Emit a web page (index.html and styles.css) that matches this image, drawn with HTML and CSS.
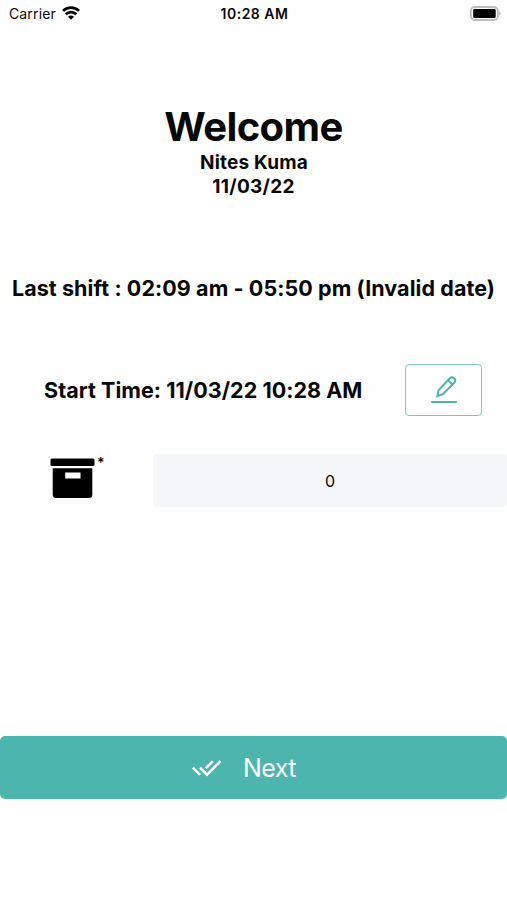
FILE: index.html
```html
<!DOCTYPE html>
<html lang="en">
<head>
<meta charset="utf-8">
<title>Welcome</title>
<link rel="stylesheet" href="styles.css">
</head>
<body>
<header class="status">
  <div class="carrier"><span>Carrier</span>
    <svg class="wifi" width="18" height="14" viewBox="0 0 18 14" fill="none" stroke="#000" stroke-width="2.7"><path d="M1 4.900C5.4.5 12.600.5 17 4.900M3.700 8.200c3-2.900 7.600-2.900 10.600 0"/><path d="M6 10.700c1.600-1.600 4.400-1.600 6 0l-3 3.100z" fill="#000" stroke="none"/></svg>
  </div>
  <div class="clock"><span>10:28 AM</span></div>
  <div class="power"><svg width="31" height="16" viewBox="0 0 31 16"><rect x=".9" y="1" width="27" height="13" rx="3.800" fill="#fff" stroke="#bdbdbd" stroke-width="1.800"/><rect x="3.200" y="3" width="22.500" height="9" rx="1.200"/><path d="M29 5.400c2 .6 2 3.400 0 4z" fill="#bdbdbd"/></svg></div>
</header>
<main>
  <section class="intro">
    <h1><span>Welcome</span></h1>
    <p class="name"><span>Nites Kuma</span></p>
    <p class="date"><span>11/03/22</span></p>
  </section>
  <p class="last"><span>Last shift : 02:09 am - 05:50 pm (Invalid date)</span></p>
  <section class="start">
    <p><span>Start Time: 11/03/22 10:28 AM</span></p>
    <button class="edit" aria-label="Edit"><svg width="30" height="30" viewBox="0 0 30 30" fill="none" stroke="#4bb5ae" stroke-width="2" stroke-linecap="round" stroke-linejoin="round"><path d="M8.200 21.300l1.500-6.200L20.800 3.200c2.800-2.600 7 1.400 4.600 4.300L14.100 19z"/><path d="M19 5.200l4.500 4.300M3 27h24"/></svg></button>
  </section>
  <section class="boxes">
    <div class="box"><svg width="45" height="41" viewBox="0 0 45 41"><rect x=".5" y=".5" width="44" height="7.500" rx="1.500"/><path fill-rule="evenodd" d="M2.700 10.300h39.600v26.200a3.500 3.500 0 0 1-3.500 3.500H6.200a3.500 3.500 0 0 1-3.500-3.500zM15.200 14.600v6h15.300v-6z"/></svg><span>*</span></div>
    <div class="field">0</div>
  </section>
  <button class="next"><svg width="30" height="18" viewBox="0 0 30 18" fill="none" stroke="#fff" stroke-width="2.500"><path d="M.9 8.700l7.200 7.200M8 8.700l7 7L28.500 2.100M13.700 9.300l7.200-7.200"/></svg><span>Next</span></button>
</main>
</body>
</html>
```
FILE: styles.css
```css
* { box-sizing: border-box; }
body { margin: 0; height: 900px; background: #fefefe; color: #080808; font-family: Inter, "Liberation Sans", sans-serif; overflow: hidden; }
h1, p { margin: 0; }
p, h1, .status { white-space: nowrap; }
button { font: inherit; padding: 0; }
svg { display: block; flex: none; }
.status { height: 28px; display: grid; grid-template-columns: 1fr auto 1fr; align-items: center; padding: 0 6px 1px 9px; font-size: 14px; }
.carrier { display: flex; align-items: center; gap: 6px; letter-spacing: .14px; }
.wifi { margin-top: -2px; }
.clock { font-weight: 600; letter-spacing: .5px; margin-left: -1px; }
.power { display: flex; justify-content: flex-end; }
.intro { margin-top: 74px; text-align: center; font-weight: 650; }
h1 { font-size: 40px; line-height: 49px; font-weight: 700; letter-spacing: -.6px; }
.name, .date { font-size: 19px; line-height: 24px; letter-spacing: .2px; }
.name { padding-left: 1px; }
.date { letter-spacing: .3px; }
.last { margin-top: 74px; text-align: center; font-size: 21.5px; line-height: 30px; font-weight: 650; letter-spacing: .08px; }
.start { margin-top: 61px; height: 52px; display: flex; justify-content: space-between; align-items: center; padding: 0 25px 0 44px; font-size: 21.5px; font-weight: 650; letter-spacing: .05px; }
.edit { width: 77px; height: 52px; border: 1.5px solid #7bcac4; border-radius: 4px; background: #fff; display: flex; align-items: center; justify-content: center; }
.boxes { margin-top: 38px; height: 53px; display: flex; }
.box { width: 153px; padding: 4px 0 0 50px; display: flex; gap: 2px; font-size: 14px; line-height: 10px; font-weight: 600; }
.field { flex: 1; border-radius: 4px; background: #f6f7fb; display: flex; align-items: center; justify-content: center; font-size: 16px; font-weight: 400; }
.next { margin-top: 229px; width: 100%; height: 63px; border: 0; border-radius: 5px; background: #4bb5ae; color: #fff; display: flex; align-items: center; justify-content: center; gap: 21px; padding-right: 19px; font-size: 25px; font-weight: 400; letter-spacing: -.6px; }
```
